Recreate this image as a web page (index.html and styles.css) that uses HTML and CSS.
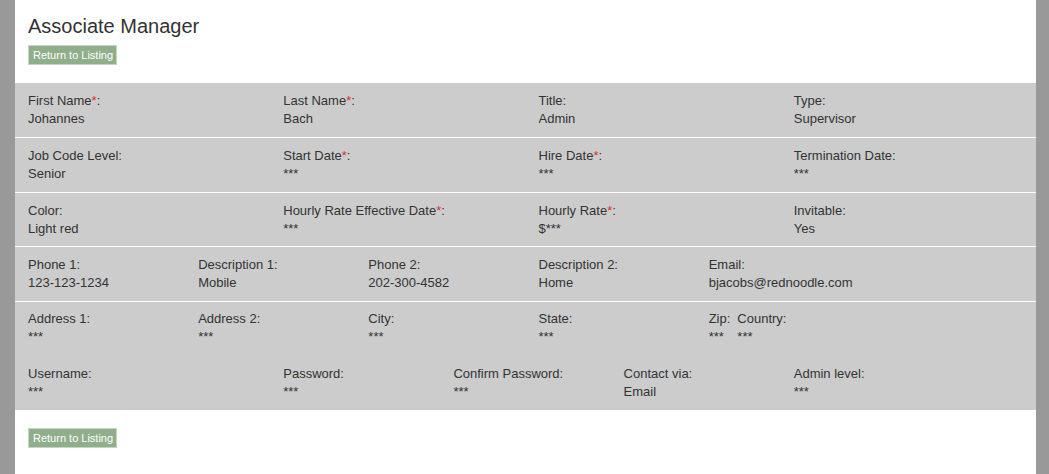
FILE: index.html
```html
<!DOCTYPE html>
<html>
<head>
<meta charset="utf-8">
<title>Associate Manager</title>
<link rel="stylesheet" href="styles.css">
</head>
<body>
<div class="page">
  <header class="header">
    <h1 class="title">Associate Manager</h1>
    <button class="btn">Return to Listing</button>
  </header>

  <section class="details">
    <div class="row">
      <div class="cell span3"><div class="label">First Name<span class="req">*</span>:</div><div class="value">Johannes</div></div>
      <div class="cell span3"><div class="label">Last Name<span class="req">*</span>:</div><div class="value">Bach</div></div>
      <div class="cell span3"><div class="label">Title:</div><div class="value">Admin</div></div>
      <div class="cell span3"><div class="label">Type:</div><div class="value">Supervisor</div></div>
    </div>
    <div class="row">
      <div class="cell span3"><div class="label">Job Code Level:</div><div class="value">Senior</div></div>
      <div class="cell span3"><div class="label">Start Date<span class="req">*</span>:</div><div class="value">***</div></div>
      <div class="cell span3"><div class="label">Hire Date<span class="req">*</span>:</div><div class="value">***</div></div>
      <div class="cell span3"><div class="label">Termination Date:</div><div class="value">***</div></div>
    </div>
    <div class="row row-tight">
      <div class="cell span3"><div class="label">Color:</div><div class="value">Light red</div></div>
      <div class="cell span3"><div class="label">Hourly Rate Effective Date<span class="req">*</span>:</div><div class="value">***</div></div>
      <div class="cell span3"><div class="label">Hourly Rate<span class="req">*</span>:</div><div class="value">$***</div></div>
      <div class="cell span3"><div class="label">Invitable:</div><div class="value">Yes</div></div>
    </div>
    <div class="row">
      <div class="cell span2"><div class="label">Phone 1:</div><div class="value">123-123-1234</div></div>
      <div class="cell span2"><div class="label">Description 1:</div><div class="value">Mobile</div></div>
      <div class="cell span2"><div class="label">Phone 2:</div><div class="value">202-300-4582</div></div>
      <div class="cell span2"><div class="label">Description 2:</div><div class="value">Home</div></div>
      <div class="cell span4"><div class="label">Email:</div><div class="value">bjacobs@rednoodle.com</div></div>
    </div>
    <div class="row row-address">
      <div class="cell span2"><div class="label">Address 1:</div><div class="value">***</div></div>
      <div class="cell span2"><div class="label">Address 2:</div><div class="value">***</div></div>
      <div class="cell span2"><div class="label">City:</div><div class="value">***</div></div>
      <div class="cell span2"><div class="label">State:</div><div class="value">***</div></div>
      <div class="cell span2 pair">
        <div class="sub"><div class="label">Zip:</div><div class="value">***</div></div>
        <div class="sub"><div class="label">Country:</div><div class="value">***</div></div>
      </div>
    </div>
    <div class="row row-last">
      <div class="cell span3"><div class="label">Username:</div><div class="value">***</div></div>
      <div class="cell span2"><div class="label">Password:</div><div class="value">***</div></div>
      <div class="cell span2"><div class="label">Confirm Password:</div><div class="value">***</div></div>
      <div class="cell span2"><div class="label">Contact via:</div><div class="value">Email</div></div>
      <div class="cell span3"><div class="label">Admin level:</div><div class="value">***</div></div>
    </div>
  </section>

  <footer class="footer">
    <button class="btn">Return to Listing</button>
  </footer>
</div>
</body>
</html>
```

FILE: styles.css
```css
html, body {
  margin: 0;
  padding: 0;
}
body {
  background: #999999;
  font-family: "Liberation Sans", Arial, sans-serif;
  color: #333333;
}
.page {
  margin: 0 13px 0 15px;
  background: #ffffff;
  min-height: 100vh;
}
.header {
  padding: 14px 13px 18px;
}
.title {
  margin: 0 0 7px;
  font-size: 20px;
  line-height: 24px;
  font-weight: normal;
  color: #333333;
}
.btn {
  display: block;
  height: 20px;
  margin: 0;
  padding: 0 3px 0 4px;
  border: 1px solid #c8d3c5;
  background: #8fae8a;
  color: #ffffff;
  font-family: "Liberation Sans", Arial, sans-serif;
  font-size: 11px;
  line-height: 18px;
  border-radius: 0;
}
.details {
  background: #cccccc;
}
.row {
  display: grid;
  grid-template-columns: repeat(12, 1fr);
  padding: 9px 0;
  border-bottom: 1px solid #ffffff;
  font-size: 13px;
  line-height: 18px;
}
.row-tight {
  padding-bottom: 8px;
}
.row-address {
  border-bottom: none;
  padding: 8px 0 10px;
}
.row-last {
  border-bottom: none;
}
.cell {
  padding-left: 13px;
  white-space: nowrap;
}
.span2 { grid-column: span 2; }
.span3 { grid-column: span 3; }
.span4 { grid-column: span 4; }
.pair {
  display: flex;
  gap: 7px;
}
.req {
  color: #e0302c;
}
.footer {
  padding: 18px 13px 20px;
}
```
